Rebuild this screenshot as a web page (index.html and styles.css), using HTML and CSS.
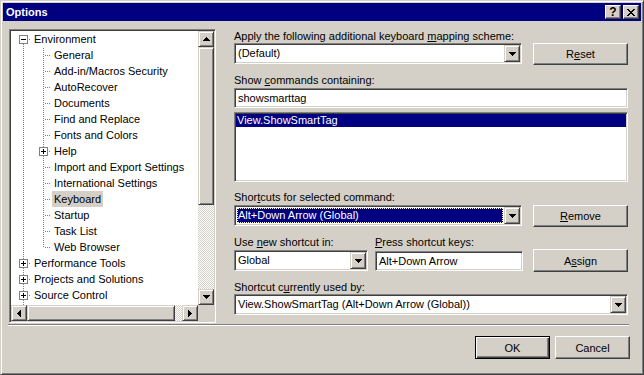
FILE: index.html
```html
<!DOCTYPE html>
<html>
<head>
    <title>Options</title>
    <link rel="stylesheet" href="styles.css">
</head>
<body>
<div class="window">
    <div class="titlebar">
        <span class="title">Options</span>
        <div class="cap-buttons">
            <span class="cap-btn help">?</span>
            <span class="cap-btn">
                <svg width="8" height="7" shape-rendering="crispEdges"><path d="M0 0h2v1h-2z M6 0h2v1h-2z M1 1h2v1h-2z M5 1h2v1h-2z M2 2h4v1h-4z M3 3h2v1h-2z M2 4h4v1h-4z M1 5h2v1h-2z M5 5h2v1h-2z M0 6h2v1h-2z M6 6h2v1h-2z"/></svg>
            </span>
        </div>
    </div>

    <div class="client">
        <div class="main">
            <!-- Tree of option pages -->
            <div class="tree">
                <div class="tree-items">
                    <div class="row"><span class="cell first"><span class="box minus"></span></span><span class="label">Environment</span></div>
                    <div class="row"><span class="cell v"></span><span class="cell t"></span><span class="label">General</span></div>
                    <div class="row"><span class="cell v"></span><span class="cell t"></span><span class="label">Add-in/Macros Security</span></div>
                    <div class="row"><span class="cell v"></span><span class="cell t"></span><span class="label">AutoRecover</span></div>
                    <div class="row"><span class="cell v"></span><span class="cell t"></span><span class="label">Documents</span></div>
                    <div class="row"><span class="cell v"></span><span class="cell t"></span><span class="label">Find and Replace</span></div>
                    <div class="row"><span class="cell v"></span><span class="cell t"></span><span class="label">Fonts and Colors</span></div>
                    <div class="row"><span class="cell v"></span><span class="cell t"><span class="box plus"></span></span><span class="label">Help</span></div>
                    <div class="row"><span class="cell v"></span><span class="cell t"></span><span class="label">Import and Export Settings</span></div>
                    <div class="row"><span class="cell v"></span><span class="cell t"></span><span class="label">International Settings</span></div>
                    <div class="row"><span class="cell v"></span><span class="cell t"></span><span class="label selected">Keyboard</span></div>
                    <div class="row"><span class="cell v"></span><span class="cell t"></span><span class="label">Startup</span></div>
                    <div class="row"><span class="cell v"></span><span class="cell t"></span><span class="label">Task List</span></div>
                    <div class="row"><span class="cell v"></span><span class="cell l"></span><span class="label">Web Browser</span></div>
                    <div class="row"><span class="cell t"><span class="box plus"></span></span><span class="label">Performance Tools</span></div>
                    <div class="row"><span class="cell t"><span class="box plus"></span></span><span class="label">Projects and Solutions</span></div>
                    <div class="row"><span class="cell t"><span class="box plus"></span></span><span class="label">Source Control</span></div>
                    <div class="row"><span class="cell t"><span class="box plus"></span></span><span class="label">Text Editor</span></div>
                </div>
                <div class="vscroll">
                    <span class="sb-btn"><svg width="7" height="4" shape-rendering="crispEdges"><path d="M3 0h1v1h1v1h1v1h1v1H0V3h1V2h1V1h1z"/></svg></span>
                    <span class="thumb thumb-v"></span>
                    <span class="track"></span>
                    <span class="sb-btn"><svg width="7" height="4" shape-rendering="crispEdges"><path d="M0 0h7v1h-1v1h-1v1h-1v1h-1v-1h-1v-1h-1v-1h-1z"/></svg></span>
                </div>
                <div class="hscroll">
                    <span class="sb-btn"><svg width="4" height="7" shape-rendering="crispEdges"><path d="M3 0h1v7h-1v-1h-1v-1h-1v-1h-1v-1h1v-1h1v-1h1z"/></svg></span>
                    <span class="thumb thumb-h"></span>
                    <span class="track"></span>
                    <span class="sb-btn"><svg width="4" height="7" shape-rendering="crispEdges"><path d="M0 0h1v1h1v1h1v1h1v1h-1v1h-1v1h-1v1h-1z"/></svg></span>
                </div>
                <div class="corner"></div>
            </div>

            <!-- Keyboard page -->
            <div class="panel">
                <div class="field-label first">Apply the following additional keyboard <u>m</u>apping scheme:</div>
                <div class="ctl-row">
                    <div class="combo">
                        <span class="combo-text">(Default)</span>
                        <span class="combo-arrow"><svg width="7" height="4" shape-rendering="crispEdges"><path d="M0 0h7v1h-1v1h-1v1h-1v1h-1v-1h-1v-1h-1v-1h-1z"/></svg></span>
                    </div>
                    <button class="btn side">R<u>e</u>set</button>
                </div>

                <div class="field-label">Show <u>c</u>ommands containing:</div>
                <div class="textbox wide">showsmarttag</div>
                <div class="listbox">
                    <div class="list-item selected">View.ShowSmartTag</div>
                </div>

                <div class="field-label">Shor<u>t</u>cuts for selected command:</div>
                <div class="ctl-row">
                    <div class="combo">
                        <span class="combo-text focused">Alt+Down Arrow (Global)</span>
                        <span class="combo-arrow"><svg width="7" height="4" shape-rendering="crispEdges"><path d="M0 0h7v1h-1v1h-1v1h-1v1h-1v-1h-1v-1h-1v-1h-1z"/></svg></span>
                    </div>
                    <button class="btn side"><u>R</u>emove</button>
                </div>

                <div class="label-row">
                    <div class="field-label scope-label">Use <u>n</u>ew shortcut in:</div>
                    <div class="field-label"><u>P</u>ress shortcut keys:</div>
                </div>
                <div class="ctl-row">
                    <div class="combo scope">
                        <span class="combo-text">Global</span>
                        <span class="combo-arrow"><svg width="7" height="4" shape-rendering="crispEdges"><path d="M0 0h7v1h-1v1h-1v1h-1v1h-1v-1h-1v-1h-1v-1h-1z"/></svg></span>
                    </div>
                    <div class="textbox keys">Alt+Down Arrow</div>
                    <button class="btn assign">A<u>s</u>sign</button>
                </div>

                <div class="field-label">Shortcut c<u>u</u>rrently used by:</div>
                <div class="combo full">
                    <span class="combo-text">View.ShowSmartTag (Alt+Down Arrow (Global))</span>
                    <span class="combo-arrow"><svg width="7" height="4" shape-rendering="crispEdges"><path d="M0 0h7v1h-1v1h-1v1h-1v1h-1v-1h-1v-1h-1v-1h-1z"/></svg></span>
                </div>
            </div>
        </div>

        <div class="separator"></div>
        <div class="footer">
            <button class="btn dialog default">OK</button>
            <button class="btn dialog">Cancel</button>
        </div>
    </div>
</div>
</body>
</html>
```

FILE: styles.css
```css
body {
    margin: 0;
    font-family: "Liberation Sans", Arial, sans-serif;
    font-size: 11px;
    color: #000;
}
.window {
    box-sizing: border-box;
    width: 644px;
    height: 375px;
    background: #d4d0c8;
    border: 1px solid;
    border-color: #d4d0c8 #404040 #404040 #d4d0c8;
    box-shadow: inset 1px 1px #fff, inset -1px -1px #808080;
    padding: 2px;
}

/* title bar */
.titlebar {
    height: 18px;
    background: #000080;
    color: #fff;
    display: flex;
    align-items: center;
    justify-content: space-between;
    padding: 0 2px 0 2px;
}
.title {
    font-weight: bold;
    font-size: 11px;
    padding-left: 1px;
}
.cap-buttons {
    display: flex;
    gap: 2px;
}
.cap-btn {
    box-sizing: border-box;
    width: 16px;
    height: 14px;
    display: flex;
    align-items: center;
    justify-content: center;
    background: #d4d0c8;
    color: #000;
    border: 1px solid;
    border-color: #fff #404040 #404040 #fff;
    box-shadow: inset -1px -1px #808080;
}
.cap-btn.help {
    font-weight: bold;
    font-size: 12px;
    line-height: 12px;
}

/* client area */
.client {
    padding: 8px 0 0 6px;
}
.main {
    display: flex;
    align-items: flex-start;
}

/* tree view */
.tree {
    box-sizing: border-box;
    width: 207px;
    height: 294px;
    background: #fff;
    border: 1px solid;
    border-color: #808080 #fff #fff #808080;
    box-shadow: inset 1px 1px #404040, inset -1px -1px #d4d0c8;
    padding: 1px;
    display: grid;
    grid-template-columns: 187px 16px;
    grid-template-rows: 274px 16px;
}
.tree-items {
    overflow: hidden;
}
.row {
    height: 16px;
    display: flex;
    align-items: flex-start;
    white-space: nowrap;
}
.cell {
    flex: none;
    display: flex;
    align-items: flex-start;
    width: 20px;
    height: 16px;
    background-repeat: no-repeat;
}
.cell.v {
    background-image: repeating-linear-gradient(#808080 0 1px, transparent 1px 2px);
    background-position: 12px 1px;
    background-size: 1px 15px;
}
.cell.t {
    background-image: repeating-linear-gradient(#808080 0 1px, transparent 1px 2px),
                      repeating-linear-gradient(to right, #808080 0 1px, transparent 1px 2px);
    background-position: 12px 1px, 14px 8px;
    background-size: 1px 15px, 6px 1px;
}
.cell.l {
    background-image: repeating-linear-gradient(#808080 0 1px, transparent 1px 2px),
                      repeating-linear-gradient(to right, #808080 0 1px, transparent 1px 2px);
    background-position: 12px 1px, 14px 8px;
    background-size: 1px 8px, 6px 1px;
}
.cell.first {
    background-image: repeating-linear-gradient(#808080 0 1px, transparent 1px 2px),
                      repeating-linear-gradient(to right, #808080 0 1px, transparent 1px 2px);
    background-position: 12px 13px, 18px 8px;
    background-size: 1px 3px, 2px 1px;
}
.box {
    box-sizing: border-box;
    width: 9px;
    height: 9px;
    margin: 4px 0 0 8px;
    border: 1px solid #808080;
    background: #fff no-repeat center;
}
.box.minus {
    background-image: linear-gradient(#000, #000);
    background-size: 5px 1px;
}
.box.plus {
    background-image: linear-gradient(#000, #000), linear-gradient(#000, #000);
    background-size: 5px 1px, 1px 5px;
}
.label {
    margin-left: 1px;
    padding: 0 2px;
    line-height: 16px;
}
.label.selected {
    background: #d4d0c8;
}

/* scroll bars */
.vscroll, .hscroll {
    display: flex;
    background: repeating-conic-gradient(#d4d0c8 0 25%, #fff 0 50%) 0 0 / 2px 2px;
}
.vscroll {
    flex-direction: column;
}
.sb-btn, .thumb, .combo-arrow {
    box-sizing: border-box;
    flex: none;
    display: flex;
    align-items: center;
    justify-content: center;
    background: #d4d0c8;
    border: 1px solid;
    border-color: #d4d0c8 #404040 #404040 #d4d0c8;
    box-shadow: inset 1px 1px #fff, inset -1px -1px #808080;
}
.sb-btn {
    width: 16px;
    height: 16px;
}
.thumb-v {
    width: 16px;
    height: 158px;
}
.thumb-h {
    width: 148px;
    height: 16px;
}
.track {
    flex: 1;
}
.corner {
    background: #d4d0c8;
}

/* keyboard page */
.panel {
    margin-left: 18px;
    width: 394px;
}
.field-label {
    line-height: 13px;
    height: 13px;
    margin-top: 9px;
    white-space: nowrap;
}
.field-label.first {
    margin-top: 1px;
}
.label-row {
    display: flex;
}
.scope-label {
    width: 141px;
}
.ctl-row {
    display: flex;
    align-items: flex-start;
}
.field-label + .ctl-row {
    margin-top: 1px;
}
.field-label.first + .ctl-row {
    margin-top: 0;
}
.label-row + .ctl-row {
    margin-top: 1px;
}

.combo, .textbox, .listbox {
    box-sizing: border-box;
    background: #fff;
    border: 1px solid;
    border-color: #808080 #fff #fff #808080;
    box-shadow: inset 1px 1px #404040, inset -1px -1px #d4d0c8;
    padding: 1px;
}
.combo {
    width: 288px;
    height: 21px;
    display: flex;
}
.combo.scope {
    width: 134px;
}
.combo.full {
    width: 394px;
}
.combo-text {
    flex: 1;
    padding-left: 2px;
    line-height: 17px;
    white-space: nowrap;
    overflow: hidden;
}
.combo-text.focused {
    margin: 1px;
    padding-left: 0;
    background: #000080;
    color: #fff;
    border: 1px dotted #fffbc0;
    line-height: 13px;
}
.combo-arrow {
    width: 16px;
    height: 17px;
}
.textbox {
    height: 20px;
    padding: 1px 3px;
    line-height: 16px;
}
.textbox.wide {
    width: 394px;
    margin-top: 1px;
}
.textbox.keys {
    width: 148px;
    margin: 1px 0 0 7px;
}
.listbox {
    width: 394px;
    height: 70px;
    margin-top: 4px;
}
.list-item {
    height: 13px;
    line-height: 13px;
    padding-left: 1px;
}
.list-item.selected {
    background: #000080;
    color: #fff;
}

/* push buttons */
.btn {
    box-sizing: border-box;
    width: 95px;
    height: 22px;
    padding: 0;
    font: inherit;
    color: #000;
    background: #d4d0c8;
    border: 1px solid;
    border-color: #fff #404040 #404040 #fff;
    box-shadow: inset -1px -1px #808080;
}
.btn u {
    text-underline-offset: 1px;
}
.btn.side {
    margin-left: 11px;
}
.btn.assign {
    margin-left: 10px;
    margin-top: -1px;
    height: 23px;
}
.btn.dialog {
    width: 75px;
    height: 23px;
}
.btn.default {
    border-color: #000;
    box-shadow: inset 1px 1px #fff, inset -1px -1px #404040, inset -2px -2px #808080;
}

.separator {
    width: 621px;
    margin: 1px 0 0 -1px;
    border-top: 1px solid #808080;
    border-bottom: 1px solid #fff;
}
.footer {
    width: 621px;
    margin-top: 10px;
    display: flex;
    justify-content: flex-end;
    gap: 5px;
}
```
